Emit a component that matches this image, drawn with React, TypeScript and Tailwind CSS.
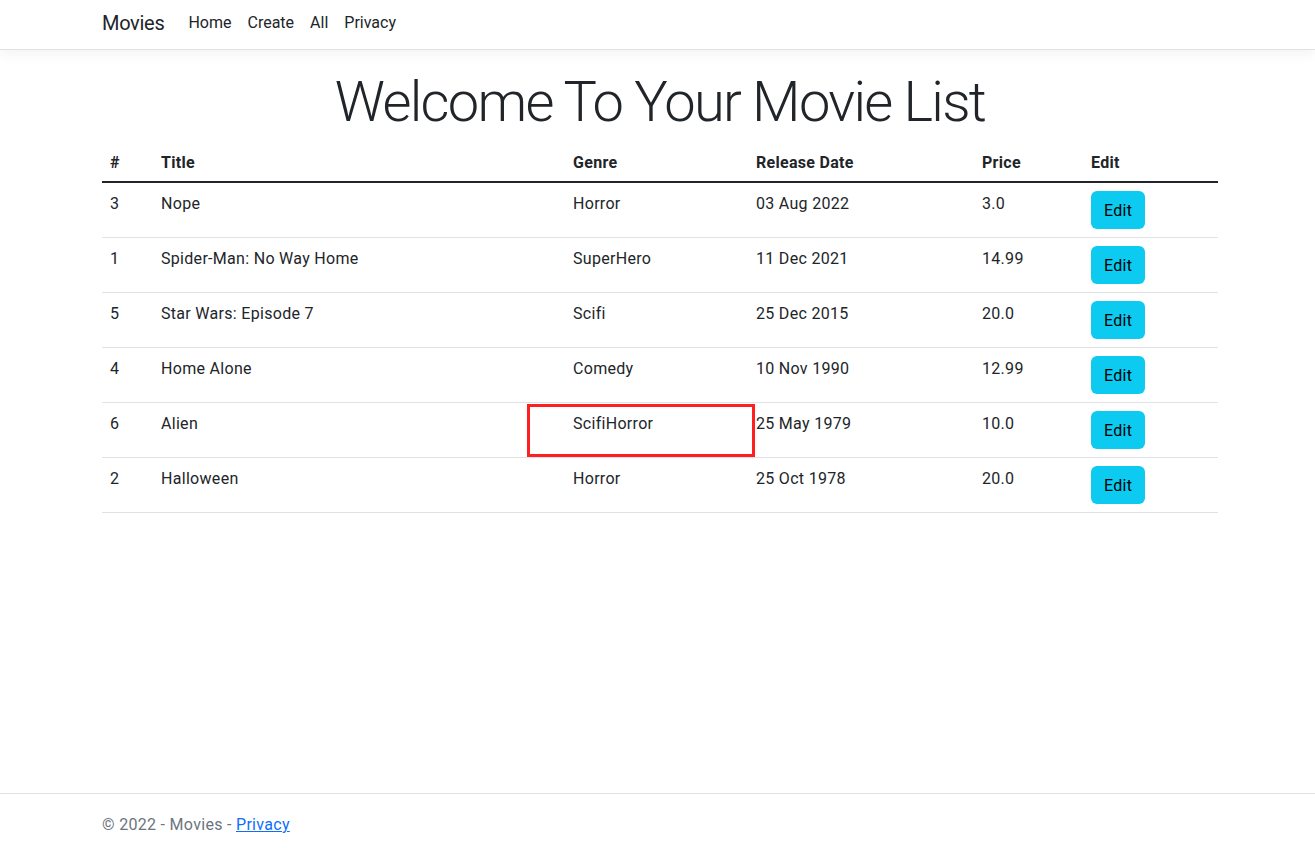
import React from "react";

type Movie = {
	id: number;
	title: string;
	genre: string;
	releaseDate: string;
	price: string;
};

const MOVIES: Movie[] = [
	{ id: 3, title: "Nope", genre: "Horror", releaseDate: "03 Aug 2022", price: "3.0" },
	{ id: 1, title: "Spider-Man: No Way Home", genre: "SuperHero", releaseDate: "11 Dec 2021", price: "14.99" },
	{ id: 5, title: "Star Wars: Episode 7", genre: "Scifi", releaseDate: "25 Dec 2015", price: "20.0" },
	{ id: 4, title: "Home Alone", genre: "Comedy", releaseDate: "10 Nov 1990", price: "12.99" },
	{ id: 6, title: "Alien", genre: "ScifiHorror", releaseDate: "25 May 1979", price: "10.0" },
	{ id: 2, title: "Halloween", genre: "Horror", releaseDate: "25 Oct 1978", price: "20.0" },
];

const NAV_LINKS = ["Home", "Create", "All", "Privacy"];

const Navbar: React.FC = () => (
	<header className="h-[50px] border-b border-[#dee2e6] bg-white shadow-[0_4px_12px_rgba(0,0,0,0.05)]">
		<nav className="ml-[90px] flex h-full w-[1140px] items-center px-3 pb-[4px]">
			<a className="mr-4 text-[20px] tracking-[-0.3px] text-[#212529]">Movies</a>
			<ul className="flex">
				{NAV_LINKS.map((link) => (
					<li key={link}>
						<a className="px-2 text-[16px] text-[#212529]">{link}</a>
					</li>
				))}
			</ul>
		</nav>
	</header>
);

const MovieTable: React.FC = () => (
	<table className="w-full table-fixed border-collapse text-left text-[16px] tracking-[0.3px] text-[#212529]">
		<colgroup>
			<col className="w-[51px]" />
			<col className="w-[412px]" />
			<col className="w-[183px]" />
			<col className="w-[226px]" />
			<col className="w-[109px]" />
			<col />
		</colgroup>
		<thead>
			<tr className="border-b-2 border-[#212529]">
				<th className="px-2 pt-[10px] pb-[6px] font-bold">#</th>
				<th className="px-2 pt-[10px] pb-[6px] font-bold">Title</th>
				<th className="px-2 pt-[10px] pb-[6px] font-bold">Genre</th>
				<th className="px-2 pt-[10px] pb-[6px] font-bold">Release Date</th>
				<th className="px-2 pt-[10px] pb-[6px] font-bold">Price</th>
				<th className="px-2 pt-[10px] pb-[6px] font-bold">Edit</th>
			</tr>
		</thead>
		<tbody>
			{MOVIES.map((movie) => (
				<tr key={movie.id} className="border-b border-[#dee2e6]">
					<td className="px-2 pt-[9px] align-top">{movie.id}</td>
					<td className="px-2 pt-[9px] align-top">{movie.title}</td>
					<td className="relative px-2 pt-[9px] align-top">
						{movie.genre}
						{movie.id === 6 && (
							<span className="pointer-events-none absolute -left-[38px] -right-[7px] top-[1px] bottom-0 border-[3px] border-[#ff1f1f]" />
						)}
					</td>
					<td className="px-2 pt-[9px] align-top">{movie.releaseDate}</td>
					<td className="px-2 pt-[9px] align-top">{movie.price}</td>
					<td className="p-2 align-top">
						<button className="h-[38px] rounded-[6px] bg-[#0dcaf0] px-[13px] pt-px text-[16px] text-black">
							Edit
						</button>
					</td>
				</tr>
			))}
		</tbody>
	</table>
);

export default function App() {
	return (
		<div className="flex h-screen flex-col bg-white font-['Roboto',sans-serif] leading-6 text-[#212529]">
			<Navbar />
			<main className="ml-[90px] mt-4 w-[1140px] flex-1 px-3">
				<h1 className="mb-[5px] pt-[3px] text-center text-[56px] font-light leading-[1.2] tracking-[-1.7px]">
					Welcome To Your Movie List
				</h1>
				<MovieTable />
			</main>
			<footer className="h-[55px] border-t border-[#dee2e6]">
				<div className="ml-[90px] w-[1140px] px-3 pt-[1px] leading-[60px] tracking-[0.3px] whitespace-nowrap text-[#6c757d]">
					© 2022 - Movies - <a className="text-[#0d6efd] underline">Privacy</a>
				</div>
			</footer>
		</div>
	);
}
